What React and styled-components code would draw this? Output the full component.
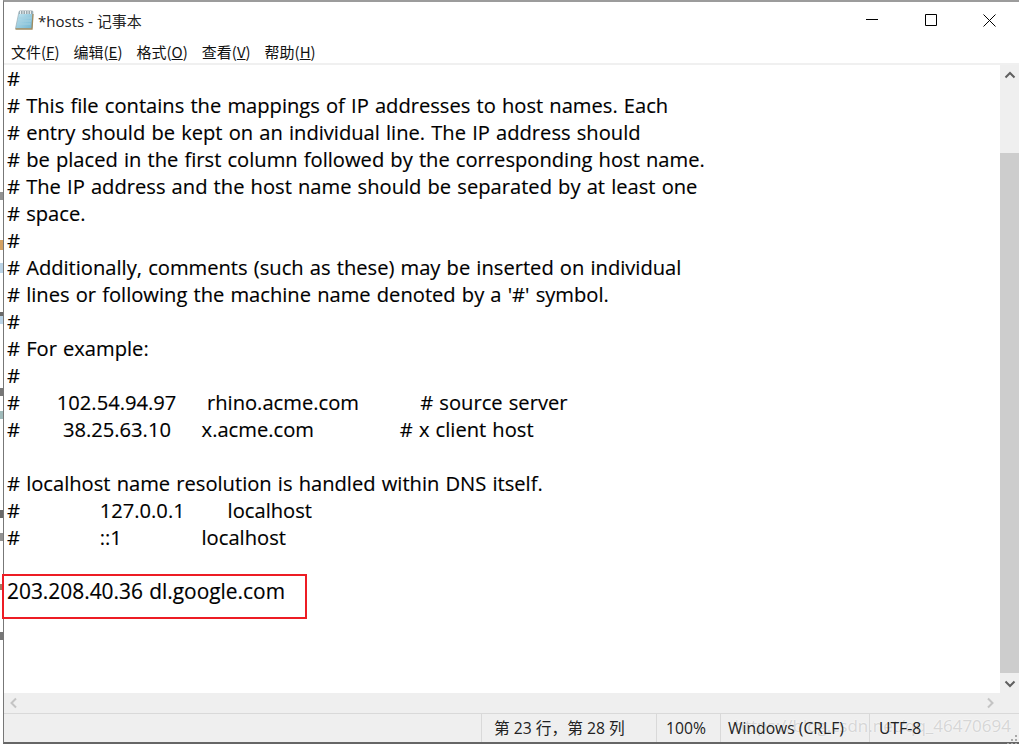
import React from 'react';
import styled, { createGlobalStyle } from 'styled-components';

const lines = [
  '#',
  '# This file contains the mappings of IP addresses to host names. Each',
  '# entry should be kept on an individual line. The IP address should',
  '# be placed in the first column followed by the corresponding host name.',
  '# The IP address and the host name should be separated by at least one',
  '# space.',
  '#',
  '# Additionally, comments (such as these) may be inserted on individual',
  "# lines or following the machine name denoted by a '#' symbol.",
  '#',
  '# For example:',
  '#',
  '#      102.54.94.97     rhino.acme.com          # source server',
  '#       38.25.63.10     x.acme.com              # x client host',
  '',
  '# localhost name resolution is handled within DNS itself.',
  '#             127.0.0.1       localhost',
  '#             ::1             localhost',
  '',
];

const menus = [
  ['文件', 'F'],
  ['编辑', 'E'],
  ['格式', 'O'],
  ['查看', 'V'],
  ['帮助', 'H'],
];

// bits of the window behind that peek out on the left
const backdropMarks = [
  [192, 8, '#777'],
  [240, 10, '#c98a3c'],
  [263, 10, '#a9c8e0'],
  [312, 4, '#444'],
  [316, 8, '#a9c8e0'],
  [388, 8, '#555'],
  [411, 8, '#8aa'],
  [510, 8, '#444'],
  [533, 8, '#777'],
  [584, 6, '#8a5a3c'],
  [632, 8, '#555'],
];

const App = () => (
  <>
    <GlobalStyle />
    <Backdrop>
      {backdropMarks.map(([top, height, color]) => (
        <Mark key={top} style={{ top, height, background: color }} />
      ))}
    </Backdrop>
    <Window>
      <TitleBar>
        <NotepadIcon />
        <Title>*hosts - 记事本</Title>
        <WindowButtons>
          <WinButton>
            <svg width="12" height="12" viewBox="0 0 12 12"><path d="M0 5.5h12" stroke="#000" fill="none" /></svg>
          </WinButton>
          <WinButton>
            <svg width="12" height="12" viewBox="0 0 12 12"><path d="M.5.5h11v11H.5z" stroke="#000" fill="none" /></svg>
          </WinButton>
          <WinButton>
            <svg width="13" height="13" viewBox="0 0 13 13"><path d="M.5.5l12 12M12.5.5l-12 12" stroke="#000" fill="none" /></svg>
          </WinButton>
        </WindowButtons>
      </TitleBar>
      <MenuBar>
        {menus.map(([name, key]) => (
          <MenuItem key={key}>{name}(<u>{key}</u>)</MenuItem>
        ))}
      </MenuBar>
      <Body>
        <EditorRow>
          <Editor>
            {lines.map((line, i) => <Line key={i}>{line}</Line>)}
            <HostLine>203.208.40.36 dl.google.com</HostLine>
            <Highlight />
          </Editor>
          <VScroll>
            <ScrollArrow size="22px"><Chevron d="M1.500 7.500L6 3l4.500 4.500" /></ScrollArrow>
            <VTrack><VThumb /></VTrack>
            <ScrollArrow size="20px"><Chevron d="M1.500 4.500L6 9l4.500-4.500" /></ScrollArrow>
          </VScroll>
        </EditorRow>
        <HScroll>
          <HArrow><Chevron d="M8 1.500L3.500 6 8 10.500" color="#c4c4c4" /></HArrow>
          <HArrow><Chevron d="M4 1.500L8.500 6 4 10.500" color="#c4c4c4" /></HArrow>
        </HScroll>
      </Body>
      <StatusBar>
        <Watermark>https://blog.csdn.net/qq_46470694</Watermark>
        <StatusSpacer />
        <StatusCell width="175px" pad="12px">第 23 行，第 28 列</StatusCell>
        <StatusCell width="64px" pad="9px">100%</StatusCell>
        <StatusCell width="149px" pad="7px">Windows (CRLF)</StatusCell>
        <StatusCell width="147px" pad="9px">UTF-8</StatusCell>
        <ResizeGrip>
          <svg width="12" height="12" viewBox="0 0 12 12">
            <path d="M8 0h2v2H8zM4 4h2v2H4zM8 4h2v2H8zM0 8h2v2H0zM4 8h2v2H4zM8 8h2v2H8z" fill="#a8a8a8" />
          </svg>
        </ResizeGrip>
      </StatusBar>
    </Window>
  </>
);

const Chevron = ({ d, color = '#606060' }) => (
  <svg width="12" height="12" viewBox="0 0 12 12">
    <path d={d} stroke={color} strokeWidth="2" fill="none" />
  </svg>
);

const NotepadIcon = () => (
  <svg width="20" height="22" viewBox="0 0 20 22" style={{ flexShrink: 0 }}>
    <defs>
      <linearGradient id="pad" x1="0" y1="0" x2="1" y2="1">
        <stop offset="0" stopColor="#c9e8f2" />
        <stop offset="1" stopColor="#6fb4d0" />
      </linearGradient>
    </defs>
    <path d="M5 2.500h14l-1 17H1.500z" fill="url(#pad)" stroke="#8fa3ab" strokeWidth=".6" />
    <path d="M5.500 1.500h13V5H5z" fill="#9aa8ae" />
    <path d="M6.500 2v3M9 2v3M11.500 2v3M14 2v3M16.500 2v3" stroke="#e8eef0" />
    <path d="M4.500 9h13M4 12h13M3.500 15h13" stroke="#a5d0e0" />
    <path d="M1.500 20h16.500L19 5" stroke="#a08c60" strokeWidth="1.300" fill="none" />
  </svg>
);

export default App;

const GlobalStyle = createGlobalStyle`
  html, body {
    margin: 0;
    padding: 0;
    background: #fff;
  }
`;

const Backdrop = styled.div`
  position: absolute;
  left: 0;
  top: 0;
  width: 3px;
  height: 744px;
`;

const Mark = styled.div`
  position: absolute;
  left: 0;
  width: 3px;
  opacity: 0.8;
`;

const Window = styled.div`
  width: 1016px;
  height: 744px;
  margin-left: 3px;
  box-sizing: border-box;
  display: flex;
  flex-direction: column;
  background: #fff;
  border-top: 2px solid #9c9c9c;
  border-left: 1px solid #777;
  border-bottom: 2px solid #666;
  font-family: 'Noto Sans CJK SC', 'Noto Sans', sans-serif;
  color: #000;
`;

const TitleBar = styled.div`
  height: 36px;
  display: flex;
  align-items: center;
  padding-left: 10px;
  gap: 4px;
`;

const Title = styled.span`
  font-family: 'Open Sans', 'Noto Sans CJK SC', sans-serif;
  font-size: 15px;
  color: #222;
`;

const WindowButtons = styled.div`
  margin-left: auto;
  display: flex;
`;

const WinButton = styled.div`
  width: 59px;
  height: 36px;
  display: flex;
  align-items: center;
  justify-content: center;
`;

const MenuBar = styled.div`
  height: 25px;
  box-sizing: content-box;
  display: flex;
  align-items: center;
  padding-left: 7px;
  gap: 14px;
  border-bottom: 2px solid #f0f0f0;
`;

const MenuItem = styled.span`
  position: relative;
  top: 1px;
  font-family: 'Noto Sans CJK SC', sans-serif;
  font-size: 15px;
  white-space: nowrap;
  color: #111;
`;

const Body = styled.div`
  flex: 1;
  min-height: 0;
  display: flex;
  flex-direction: column;
`;

const EditorRow = styled.div`
  flex: 1;
  min-height: 0;
  display: flex;
`;

const Editor = styled.div`
  flex: 1;
  position: relative;
  padding: 0 0 0 3px;
`;

const Line = styled.div`
  height: 27px;
  line-height: 27px;
  font-family: 'Open Sans', sans-serif;
  font-size: 20.150px;
  word-spacing: 0.9px;
  -webkit-text-stroke: 0.15px #000;
  white-space: pre;
  color: #000;
`;

const HostLine = styled(Line)`
  font-size: 20.900px;
`;

const Highlight = styled.div`
  position: absolute;
  left: -2px;
  top: 509px;
  width: 305px;
  height: 45px;
  box-sizing: border-box;
  border: 2px solid #ed1c24;
`;

const VScroll = styled.div`
  width: 19px;
  display: flex;
  flex-direction: column;
  background: #efefef;
`;

const ScrollArrow = styled.div`
  height: ${props => props.size};
  display: flex;
  align-items: center;
  justify-content: center;
`;

const VTrack = styled.div`
  flex: 1;
  padding-top: 66px;
  display: flex;
`;

const VThumb = styled.div`
  flex: 1;
  background: #cdcdcd;
`;

const HScroll = styled.div`
  height: 20px;
  display: flex;
  justify-content: space-between;
  align-items: center;
  background: #efefef;
  padding-right: 19px;
  border-bottom: 1px solid #d9d9d9;
`;

const HArrow = styled.div`
  width: 20px;
  display: flex;
  justify-content: center;
`;

const StatusBar = styled.div`
  height: 28px;
  display: flex;
  position: relative;
  background: #efefef;
  font-family: 'Open Sans', 'Noto Sans CJK SC', sans-serif;
  font-size: 15.700px;
`;

const StatusSpacer = styled.div`
  width: 477px;
`;

const StatusCell = styled.div`
  position: relative;
  z-index: 1;
  width: ${props => props.width};
  box-sizing: border-box;
  padding-left: ${props => props.pad};
  line-height: 29px;
  border-left: 1px solid #d9d9d9;
  white-space: nowrap;
  color: #222;
`;

const Watermark = styled.div`
  position: absolute;
  right: 8px;
  top: -1px;
  font-size: 17px;
  line-height: 25px;
  color: rgba(205, 205, 205, 0.8);
  text-shadow: 0 0 2px #fff;
  white-space: nowrap;
`;

const ResizeGrip = styled.div`
  position: absolute;
  right: 0;
  bottom: 0;
  width: 12px;
  height: 12px;
`;
